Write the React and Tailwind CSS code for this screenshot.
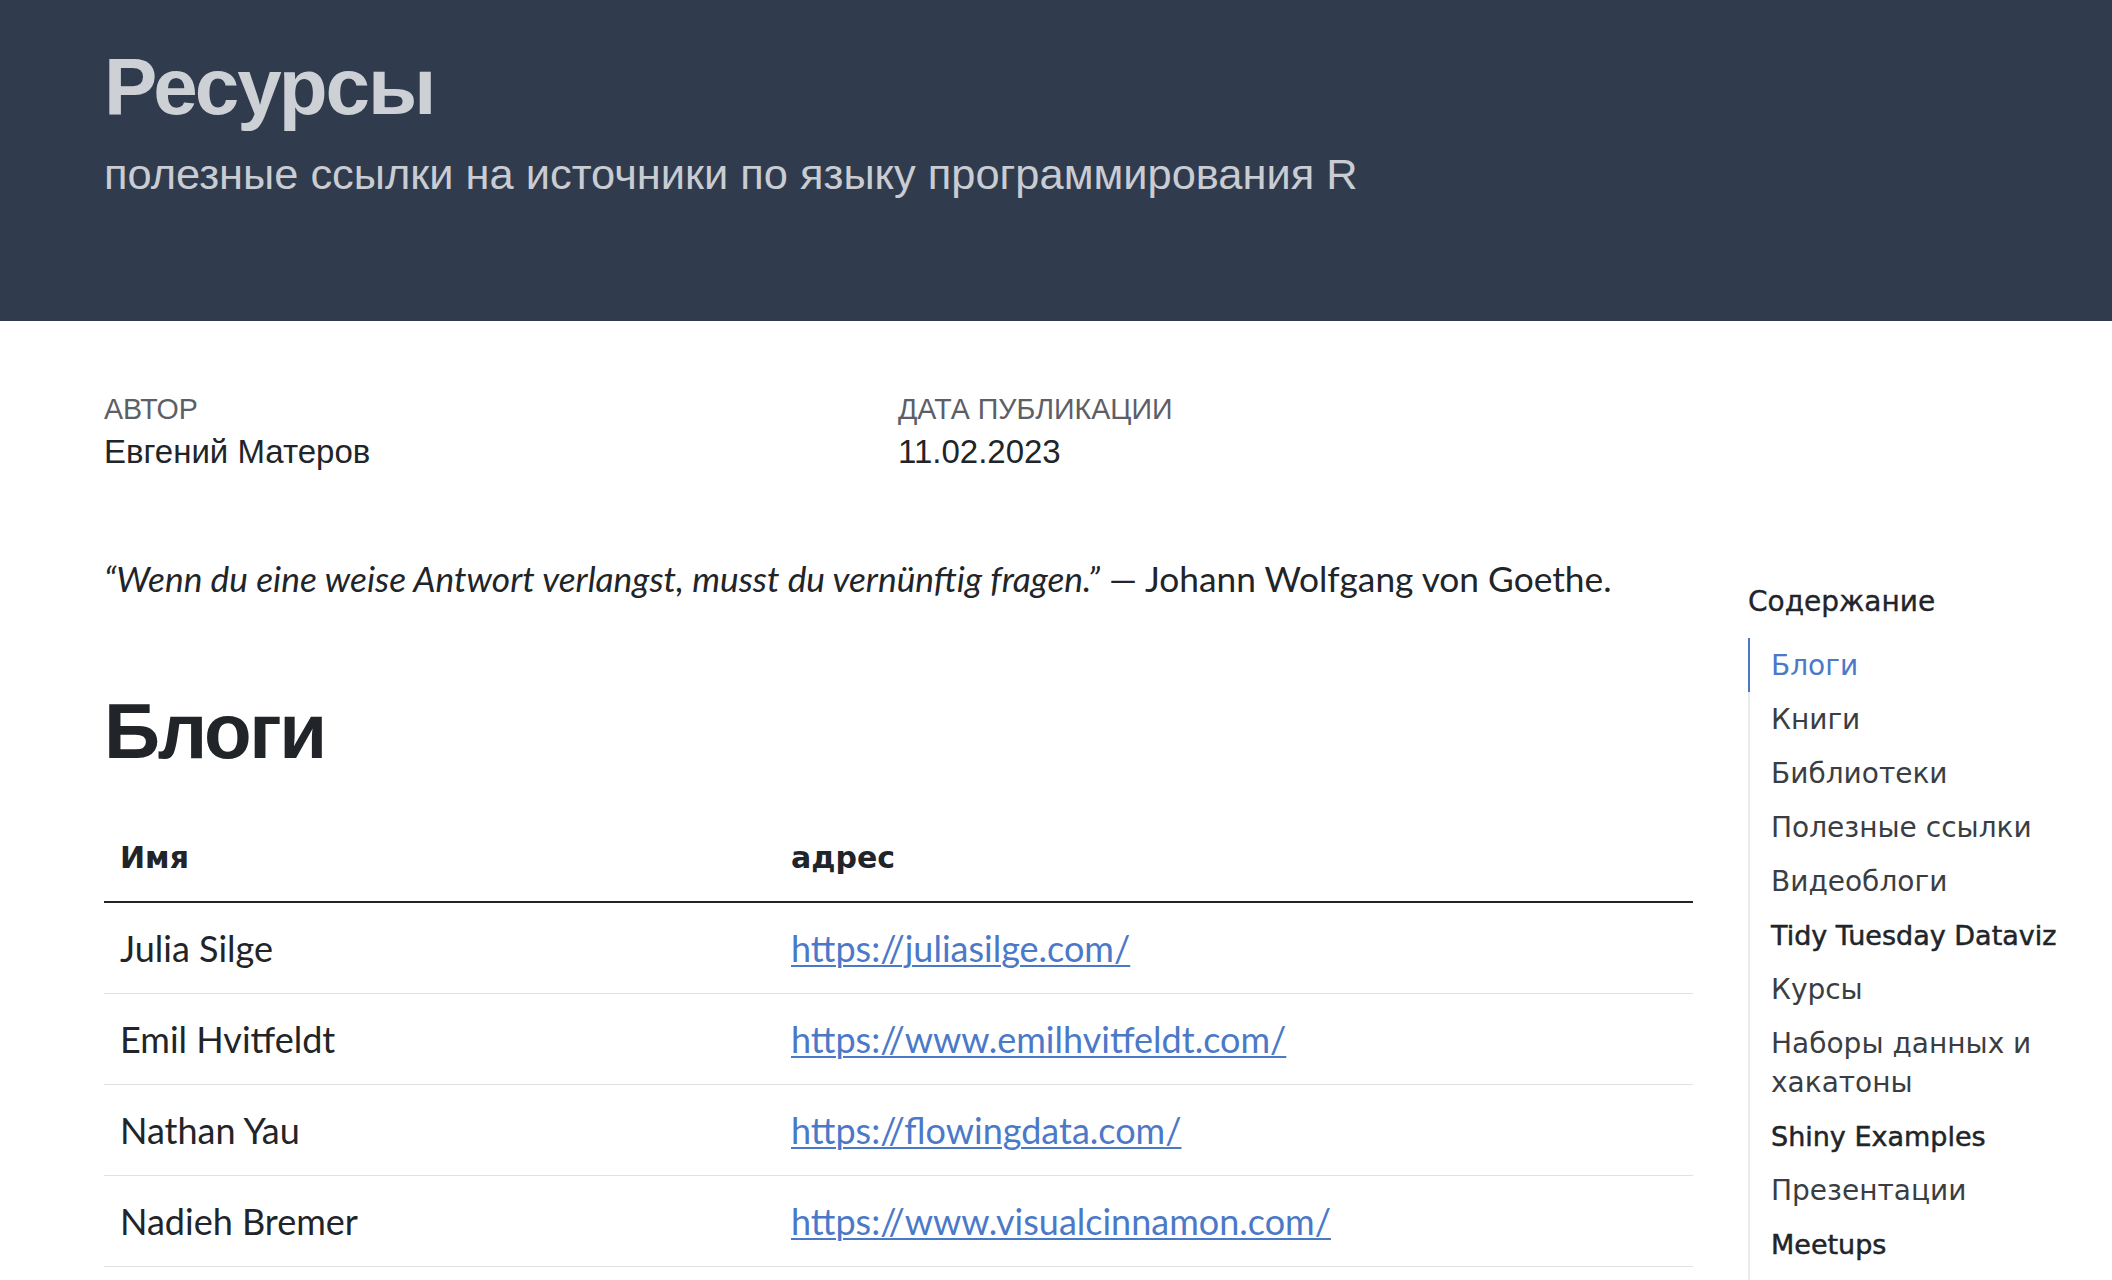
import React from "react";

const sans = "font-['Liberation_Sans',Arial,sans-serif]";
const lato = "font-['Lato','Liberation_Sans',sans-serif]";
const toc = "font-['DejaVu_Sans','Liberation_Sans',sans-serif]";

const rows = [
  ["Julia Silge", "https://juliasilge.com/"],
  ["Emil Hvitfeldt", "https://www.emilhvitfeldt.com/"],
  ["Nathan Yau", "https://flowingdata.com/"],
  ["Nadieh Bremer", "https://www.visualcinnamon.com/"],
];

const tocItems = [
  { t: "Блоги", active: true },
  { t: "Книги" },
  { t: "Библиотеки" },
  { t: "Полезные ссылки" },
  { t: "Видеоблоги" },
  { t: "Tidy Tuesday Dataviz", latin: true },
  { t: "Курсы" },
  { t: "Наборы данных и хакатоны" },
  { t: "Shiny Examples", latin: true },
  { t: "Презентации" },
  { t: "Meetups", latin: true },
];

export default function App() {
  return (
    <div className="w-[2112px] h-[1280px] overflow-hidden bg-white text-[#212529]">
      <header className="h-[321px] bg-[#303c4e] pl-[104px] pt-[39px]">
        <h1 className={`${sans} text-[80px] leading-[96px] font-bold tracking-[-0.025em] text-[#cdd1d6]`}>
          Ресурсы
        </h1>
        <p className={`${sans} mt-[13px] text-[43.4px] leading-[53px] text-[#c9cdd3]`}>
          полезные ссылки на источники по языку программирования R
        </p>
      </header>

      <div className="flex pl-[104px] gap-[55px]">
        <main className="w-[1589px] shrink-0">
          <div className="grid grid-cols-[794px_auto] mt-[70px]">
            <div>
              <div className={`${sans} text-[28.6px] leading-[36px] uppercase text-[#5c6066]`}>Автор</div>
              <div className={`${sans} text-[33px] leading-[49px]`}>Евгений Матеров</div>
            </div>
            <div>
              <div className={`${sans} text-[28.6px] leading-[36px] uppercase text-[#5c6066]`}>Дата публикации</div>
              <div className={`${sans} text-[33px] leading-[49px]`}>11.02.2023</div>
            </div>
          </div>

          <p className={`${lato} mt-[76px] text-[35.3px] leading-[54px]`}>
            <em>“Wenn du eine weise Antwort verlangst, musst du vernünftig fragen.”</em> — Johann Wolfgang von Goethe.
          </p>

          <h2 className={`${sans} mt-[78px] text-[78px] leading-[94px] font-bold tracking-[-0.03em]`}>Блоги</h2>

          <table className={`${lato} mt-[38px] w-full border-collapse`}>
            <colgroup>
              <col className="w-[671px]" />
              <col />
            </colgroup>
            <thead>
              <tr className="border-b-2 border-[#212529]">
                <th className={`${toc} text-left font-bold text-[30px] leading-[45px] px-[16px] pt-[19px] pb-[21px]`}>Имя</th>
                <th className={`${toc} text-left font-bold text-[30px] leading-[45px] px-[16px] pt-[19px] pb-[21px]`}>адрес</th>
              </tr>
            </thead>
            <tbody>
              {rows.map(([name, url]) => (
                <tr key={name} className="border-b border-[#dee2e6]">
                  <td className="text-[36px] leading-[54px] px-[16px] py-[18px]">{name}</td>
                  <td className="text-[36px] leading-[54px] px-[16px] py-[18px]">
                    <a href="#" className="text-[#4b79c8] underline decoration-[2px] underline-offset-[3px]">
                      {url}
                    </a>
                  </td>
                </tr>
              ))}
            </tbody>
          </table>
        </main>

        <aside className={`${toc} flex-1 mt-[261px] pr-[12px]`}>
          <div className="text-[28px] leading-[39px] text-[#212529] mb-[17px] [-webkit-text-stroke:0.35px_#212529]">
            Содержание
          </div>
          <nav className="border-l-2 border-[#e9ecef] h-[720px]">
            {tocItems.map((it) => (
              <div
                key={it.t}
                className={
                  it.active
                    ? "-ml-[2px] border-l-2 border-[#4b79c8] pl-[21px] py-[7.5px] text-[28px] leading-[39px] text-[#4b79c8]"
                    : it.latin
                    ? "pl-[21px] py-[7.5px] text-[27px] leading-[39px] text-[#212529] [-webkit-text-stroke:0.5px_#212529]"
                    : "pl-[21px] py-[7.5px] text-[28px] leading-[39px] text-[#3a3e43]"
                }
              >
                {it.t}
              </div>
            ))}
          </nav>
        </aside>
      </div>
    </div>
  );
}
